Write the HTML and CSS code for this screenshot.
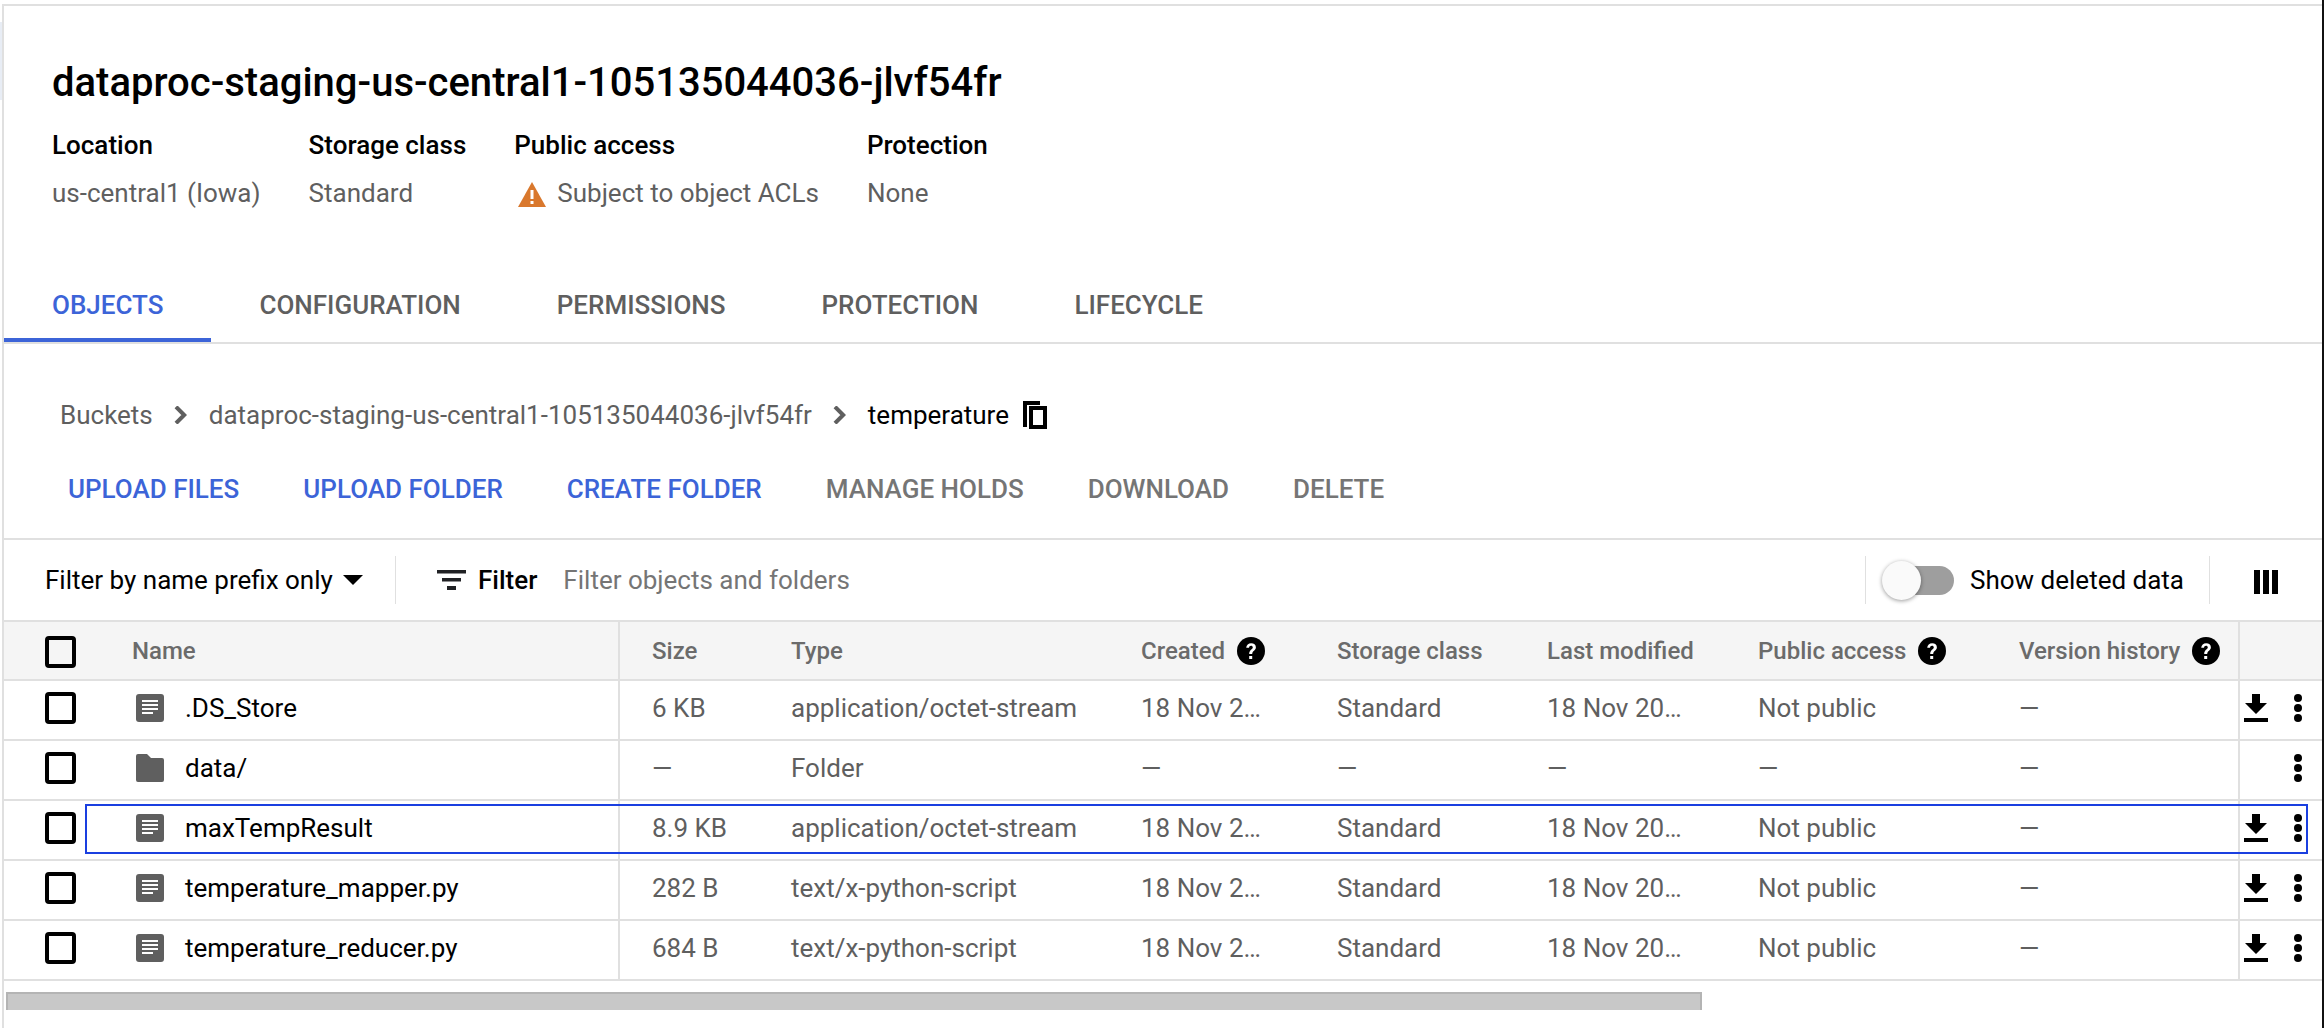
FILE: index.html
```html
<!DOCTYPE html>
<html lang="en">
<head>
<meta charset="utf-8">
<title>Bucket details</title>
<link rel="stylesheet" href="styles.css">
</head>
<body>
<svg class="defs" width="0" height="0" aria-hidden="true">
  <symbol id="i-file" viewBox="0 0 28 28"><rect width="28" height="28" rx="3" fill="#5f5f5f"/><path d="M6 6h16v2H6zM6 10h16v2H6zM6 14h16v2H6zM6 18h11v2H6z" fill="#fff"/></symbol>
  <symbol id="i-folder" viewBox="0 0 28 28"><path d="M2 0h9l4 4h11a2 2 0 0 1 2 2v20a2 2 0 0 1-2 2H2a2 2 0 0 1-2-2V2a2 2 0 0 1 2-2z" fill="#5f5f5f"/></symbol>
  <symbol id="i-dl" viewBox="0 0 24 28"><path d="M8 0h8v9h7L12 20 1 9h7zM0 24h24v4H0z" fill="#000"/></symbol>
  <symbol id="i-more" viewBox="0 0 8 28"><circle cx="4" cy="4" r="4"/><circle cx="4" cy="14" r="4"/><circle cx="4" cy="24" r="4"/></symbol>
  <symbol id="i-help" viewBox="0 0 28 28"><circle cx="14" cy="14" r="14" fill="#000"/><path d="M9.2 10.800c.2-2.900 2.200-4.600 5-4.600 2.700 0 4.700 1.600 4.700 4 0 3.400-3.700 3.500-3.700 6.800h-3c0-4.300 3.600-4.400 3.600-6.700 0-1-.8-1.600-1.800-1.600-1.200 0-1.900.8-2 2.100zM12.200 18.900h3v3h-3z" fill="#fff"/></symbol>
  <symbol id="i-chev" viewBox="0 0 13 18"><path d="M2 .8l8.200 8.200-8.200 8.200" fill="none" stroke="#5f5f5f" stroke-width="4"/></symbol>
</svg>

<div class="edge-tint"></div>

<main class="page">
  <h1 class="title">dataproc-staging-us-central1-105135044036-jlvf54fr</h1>

  <section class="facts">
    <div class="fact"><div class="fact-label">Location</div><div class="fact-value">us-central1 (Iowa)</div></div>
    <div class="fact"><div class="fact-label">Storage class</div><div class="fact-value">Standard</div></div>
    <div class="fact"><div class="fact-label">Public access</div>
      <div class="fact-value">
        <svg class="warn" viewBox="0 0 28 25"><path d="M14 0L28 25H0z" fill="#d9782d"/><path d="M12.500 8h3v9h-3zM12.500 19h3v3h-3z" fill="#fff"/></svg>
        Subject to object ACLs
      </div>
    </div>
    <div class="fact"><div class="fact-label">Protection</div><div class="fact-value">None</div></div>
  </section>

  <nav class="tabs">
    <a class="tab active">OBJECTS</a>
    <a class="tab">CONFIGURATION</a>
    <a class="tab">PERMISSIONS</a>
    <a class="tab">PROTECTION</a>
    <a class="tab">LIFECYCLE</a>
  </nav>

  <div class="crumbs">
    <span>Buckets</span>
    <svg class="chev"><use href="#i-chev"/></svg>
    <span>dataproc-staging-us-central1-105135044036-jlvf54fr</span>
    <svg class="chev"><use href="#i-chev"/></svg>
    <span class="crumb-current">temperature</span>
    <svg class="copy" viewBox="0 0 24 28"><path d="M2 26V2h15M8 7h14v19H8z" fill="none" stroke="#000" stroke-width="4"/></svg>
  </div>

  <div class="actions">
    <a class="action on">UPLOAD FILES</a>
    <a class="action on">UPLOAD FOLDER</a>
    <a class="action on">CREATE FOLDER</a>
    <a class="action">MANAGE HOLDS</a>
    <a class="action">DOWNLOAD</a>
    <a class="action">DELETE</a>
  </div>

  <div class="filterbar">
    <div class="prefix">Filter by name prefix only<span class="caret"></span></div>
    <div class="filter-btn">
      <svg class="filter-icon" viewBox="0 0 29 20"><path d="M0 0h29v3.500H0zM5 8h19v3.500H5zM10 16h9v4h-9z" fill="#202124"/></svg>
      <b>Filter</b>
    </div>
    <div class="placeholder">Filter objects and folders</div>
    <div class="toggle-wrap">
      <span class="toggle"><span class="knob"></span></span>
      <span>Show deleted data</span>
    </div>
    <div class="cols-wrap">
      <svg class="cols-icon" viewBox="0 0 24 24"><path d="M0 0h6v24H0zM9 0h6v24H9zM18 0h6v24h-6z" fill="#000"/></svg>
    </div>
  </div>

  <div class="table">
    <div class="row head">
      <div class="c c-check"><span class="box"></span></div>
      <div class="c c-name">Name</div>
      <div class="c c-size">Size</div>
      <div class="c">Type</div>
      <div class="c">Created<svg class="help"><use href="#i-help"/></svg></div>
      <div class="c">Storage class</div>
      <div class="c">Last modified</div>
      <div class="c">Public access<svg class="help"><use href="#i-help"/></svg></div>
      <div class="c">Version history<svg class="help"><use href="#i-help"/></svg></div>
      <div class="c c-act"></div>
    </div>

    <div class="row">
      <div class="c c-check"><span class="box"></span></div>
      <div class="c c-name"><svg class="ficon"><use href="#i-file"/></svg><span class="fname">.DS_Store</span></div>
      <div class="c c-size">6 KB</div>
      <div class="c">application/octet-stream</div>
      <div class="c">18 Nov 2…</div>
      <div class="c">Standard</div>
      <div class="c">18 Nov 20…</div>
      <div class="c">Not public</div>
      <div class="c">—</div>
      <div class="c c-act"><svg class="dl"><use href="#i-dl"/></svg><svg class="more"><use href="#i-more"/></svg></div>
    </div>

    <div class="row">
      <div class="c c-check"><span class="box"></span></div>
      <div class="c c-name"><svg class="ficon"><use href="#i-folder"/></svg><span class="fname">data/</span></div>
      <div class="c c-size">—</div>
      <div class="c">Folder</div>
      <div class="c">—</div>
      <div class="c">—</div>
      <div class="c">—</div>
      <div class="c">—</div>
      <div class="c">—</div>
      <div class="c c-act end"><svg class="more"><use href="#i-more"/></svg></div>
    </div>

    <div class="row focused">
      <div class="c c-check"><span class="box"></span></div>
      <div class="c c-name"><svg class="ficon"><use href="#i-file"/></svg><span class="fname">maxTempResult</span></div>
      <div class="c c-size">8.9 KB</div>
      <div class="c">application/octet-stream</div>
      <div class="c">18 Nov 2…</div>
      <div class="c">Standard</div>
      <div class="c">18 Nov 20…</div>
      <div class="c">Not public</div>
      <div class="c">—</div>
      <div class="c c-act"><svg class="dl"><use href="#i-dl"/></svg><svg class="more"><use href="#i-more"/></svg></div>
    </div>

    <div class="row">
      <div class="c c-check"><span class="box"></span></div>
      <div class="c c-name"><svg class="ficon"><use href="#i-file"/></svg><span class="fname">temperature_mapper.py</span></div>
      <div class="c c-size">282 B</div>
      <div class="c">text/x-python-script</div>
      <div class="c">18 Nov 2…</div>
      <div class="c">Standard</div>
      <div class="c">18 Nov 20…</div>
      <div class="c">Not public</div>
      <div class="c">—</div>
      <div class="c c-act"><svg class="dl"><use href="#i-dl"/></svg><svg class="more"><use href="#i-more"/></svg></div>
    </div>

    <div class="row">
      <div class="c c-check"><span class="box"></span></div>
      <div class="c c-name"><svg class="ficon"><use href="#i-file"/></svg><span class="fname">temperature_reducer.py</span></div>
      <div class="c c-size">684 B</div>
      <div class="c">text/x-python-script</div>
      <div class="c">18 Nov 2…</div>
      <div class="c">Standard</div>
      <div class="c">18 Nov 20…</div>
      <div class="c">Not public</div>
      <div class="c">—</div>
      <div class="c c-act"><svg class="dl"><use href="#i-dl"/></svg><svg class="more"><use href="#i-more"/></svg></div>
    </div>
  </div>

  <div class="hscroll"><div class="thumb"></div></div>
</main>
</body>
</html>
```

FILE: styles.css
```css
*, *::after { box-sizing: border-box; }
html, body { margin: 0; padding: 0; height: 100%; background: #fff; overflow: hidden; }
body {
  font-family: Roboto, "Liberation Sans", sans-serif;
  font-size: 26px;
  color: #000;
  padding: 4px 0 0 2px;
  border-right: 2px solid #111;
}
.defs { position: absolute; }
.edge-tint { position: absolute; left: 0; top: 22px; width: 2px; height: 78px; background: #e8edf5; }

.page {
  height: 1024px;
  border-top: 2px solid #e0e0e0;
  border-left: 2px solid #e0e0e0;
}

.title { margin: 0; padding: 55px 0 0 48px; font-size: 40px; line-height: 44px; font-weight: 500; }

.facts { display: flex; padding: 25px 0 0 48px; }
.fact { margin-right: 48px; }
.fact-label { font-weight: 500; line-height: 30px; }
.fact-value { color: #5f5f5f; line-height: 30px; margin-top: 18px; display: flex; align-items: center; white-space: nowrap; }
.warn { width: 28px; height: 25px; margin: 2px 11px 0 4px; }

.tabs { display: flex; margin-top: 64px; height: 72px; border-bottom: 2px solid #e0e0e0; }
.tab { font-weight: 500; color: #5f5f5f; padding: 18px 48px 0; line-height: 30px; height: 70px; }
.tab.active { color: #3c64d8; border-bottom: 4px solid #3c64d8; }

.crumbs { display: flex; align-items: center; padding: 42px 0 0 56px; height: 100px; color: #5f5f5f; }
.chev { width: 13px; height: 18px; margin: 0 22px 0 21px; }
.crumb-current { color: #000; }
.copy { width: 24px; height: 28px; margin-left: 14px; }

.actions { display: flex; height: 96px; padding: 0 0 4px 64px; align-items: center; border-bottom: 2px solid #e0e0e0; }
.action { font-weight: 500; color: #757575; margin-right: 64px; white-space: nowrap; }
.action.on { color: #3c64d8; }

.filterbar { display: flex; align-items: center; height: 80px; }
.prefix { display: flex; align-items: center; padding-left: 41px; width: 392px; height: 48px; border-right: 1px solid #e0e0e0; white-space: nowrap; }
.caret { width: 0; height: 0; border-left: 10px solid transparent; border-right: 10px solid transparent; border-top: 10px solid #000; margin-left: 10px; }
.filter-btn { display: flex; align-items: center; margin-left: 41px; }
.filter-btn b { font-weight: 500; margin-left: 12px; }
.filter-icon { width: 29px; height: 20px; }
.placeholder { color: #757575; margin-left: 26px; flex: 1; }
.toggle-wrap { display: flex; align-items: center; height: 48px; border-left: 1px solid #e0e0e0; padding-left: 17px; width: 344px; flex: none; white-space: nowrap; }
.toggle { display: block; position: relative; width: 71px; height: 29px; border-radius: 15px; background: #9e9e9e; margin-right: 16px; flex: none; }
.knob { position: absolute; left: -1px; top: -5px; width: 39px; height: 39px; border-radius: 50%; background: #fafafa; box-shadow: 0 1px 4px rgba(0,0,0,.4); }
.cols-wrap { display: flex; align-items: center; height: 48px; border-left: 1px solid #e0e0e0; padding-left: 44px; width: 113px; flex: none; }
.cols-icon { width: 24px; height: 24px; margin-top: 4px; }

.row {
  position: relative;
  display: grid;
  grid-template-columns: 128px 488px 171px 350px 196px 210px 211px 261px 219px 1fr;
  height: 60px;
  border-top: 2px solid #e0e0e0;
  color: #5f5f5f;
  align-items: stretch;
  white-space: nowrap;
}
.row:last-child { border-bottom: 2px solid #e0e0e0; height: 62px; }
.row.head { height: 59px; background: #f5f5f5; font-size: 24px; font-weight: 500; color: #6b6b6b; }
.c { display: flex; align-items: center; }
.row:not(.head) .c { padding-bottom: 4px; }
.head .c-check { padding-top: 3px; }
.c-check { padding-left: 41px; }
.box { display: block; width: 31px; height: 32px; border: 4px solid #000; border-radius: 4px; }
.c-name { border-right: 2px solid #e0e0e0; }
.row:not(.head) .c-name { padding-left: 4px; }
.c-size { padding-left: 32px; }
.c-act { border-left: 2px solid #e0e0e0; padding-left: 4px; gap: 26px; }
.c-act.end { padding-left: 54px; }
.help { width: 28px; height: 28px; margin-left: 12px; flex: none; }
.ficon { width: 28px; height: 28px; flex: none; }
.fname { color: #000; margin-left: 21px; }
.dl { width: 24px; height: 28px; flex: none; }
.more { width: 8px; height: 28px; flex: none; }

.focused::after {
  content: "";
  position: absolute;
  left: 81px;
  right: 14px;
  top: 3px;
  height: 50px;
  border: 2px solid #1a3fe0;
  pointer-events: none;
}

.hscroll { padding: 11px 0 0 2px; }
.thumb { width: 1696px; height: 18px; background: #c8c8c8; border-top: 2px solid #b4b4b4; border-left: 2px solid #b4b4b4; border-right: 2px solid #b4b4b4; }
```
